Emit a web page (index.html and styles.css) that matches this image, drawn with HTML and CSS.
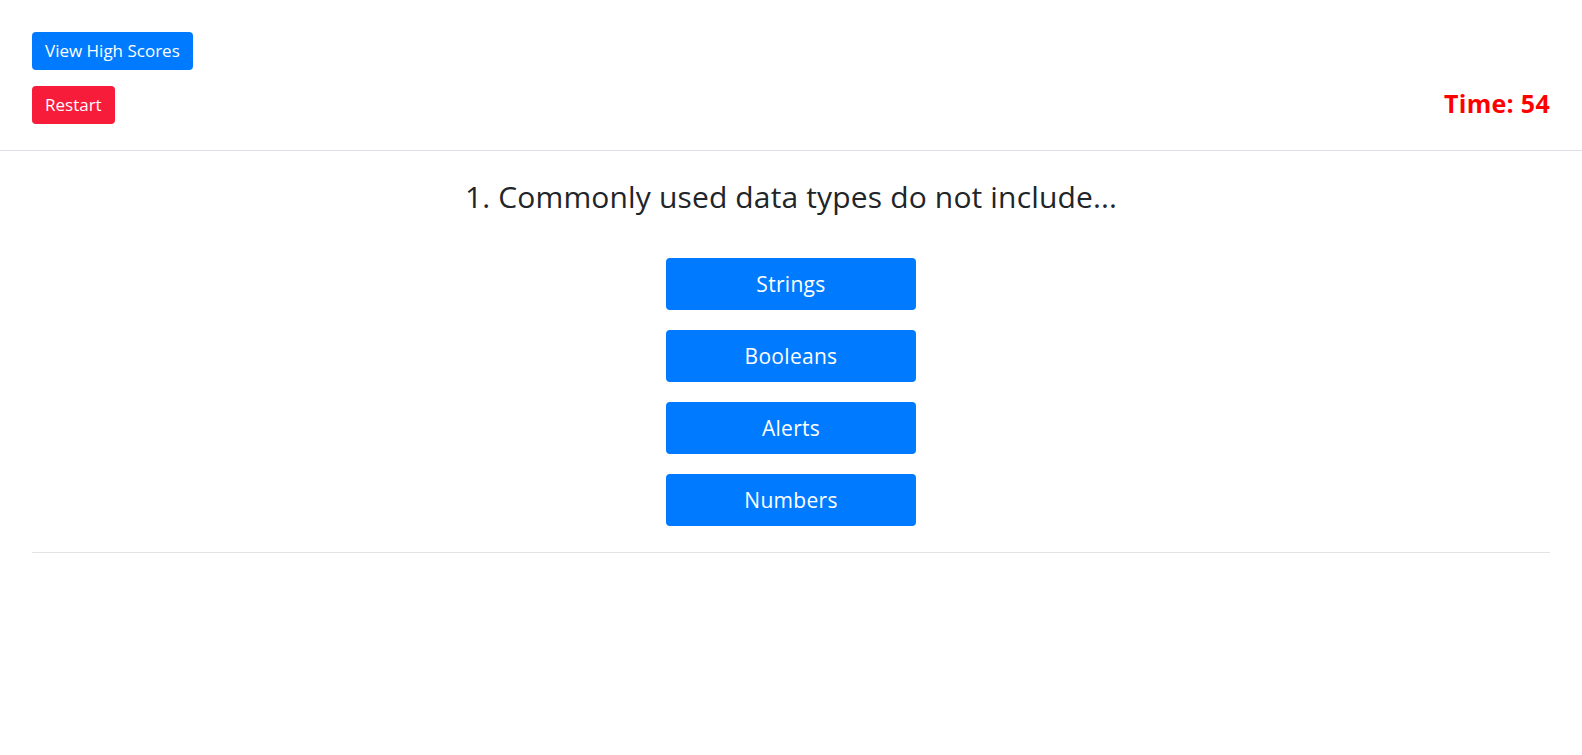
FILE: index.html
```html
<!DOCTYPE html>
<html lang="en">
<head>
<meta charset="utf-8">
<title>Code Quiz</title>
<link rel="stylesheet" href="styles.css">
</head>
<body>
<header class="top-bar">
  <div class="controls">
    <button class="btn btn-blue">View High Scores</button>
    <button class="btn btn-red">Restart</button>
  </div>
  <div class="timer">Time: 54</div>
</header>
<main class="quiz">
  <h2 class="question">1. Commonly used data types do not include...</h2>
  <div class="answers">
    <button class="answer">Strings</button>
    <button class="answer">Booleans</button>
    <button class="answer">Alerts</button>
    <button class="answer">Numbers</button>
  </div>
  <div class="rule"></div>
</main>
</body>
</html>
```
FILE: styles.css
```css
* { box-sizing: border-box; }
body {
  margin: 0;
  font-family: "Open Sans", "Noto Sans", sans-serif;
  color: #212529;
  background: #fff;
}
.top-bar {
  display: flex;
  justify-content: space-between;
  align-items: flex-end;
  padding: 32px 32px 26px;
  border-bottom: 1px solid #dee2e6;
}
.controls {
  display: flex;
  flex-direction: column;
  align-items: flex-start;
  gap: 16px;
}
.btn {
  font-family: inherit;
  font-size: 17px;
  line-height: 24px;
  padding: 6px 12px;
  border: 1px solid transparent;
  border-radius: 4px;
  color: #fff;
  cursor: pointer;
}
.btn-blue { background: #007bff; }
.btn-red { background: #f61c3a; }
.timer {
  color: #ff0000;
  font-weight: 700;
  font-size: 25px;
  letter-spacing: 0.3px;
  line-height: 38px;
  margin-bottom: 2px;
}
.quiz {
  padding: 0 32px;
}
.question {
  margin: 28px 0 0;
  font-size: 30px;
  font-weight: 400;
  letter-spacing: 0.15px;
  line-height: 1.2;
  text-align: center;
}
.answers {
  display: flex;
  flex-direction: column;
  align-items: center;
  gap: 20px;
  margin-top: 43px;
}
.answer {
  width: 250px;
  height: 52px;
  border: none;
  border-radius: 4px;
  background: #007bff;
  color: #fff;
  font-family: inherit;
  font-size: 21px;
  letter-spacing: 0.3px;
  cursor: pointer;
}
.rule {
  margin-top: 26px;
  border-top: 1px solid #e3e3e3;
}
```
